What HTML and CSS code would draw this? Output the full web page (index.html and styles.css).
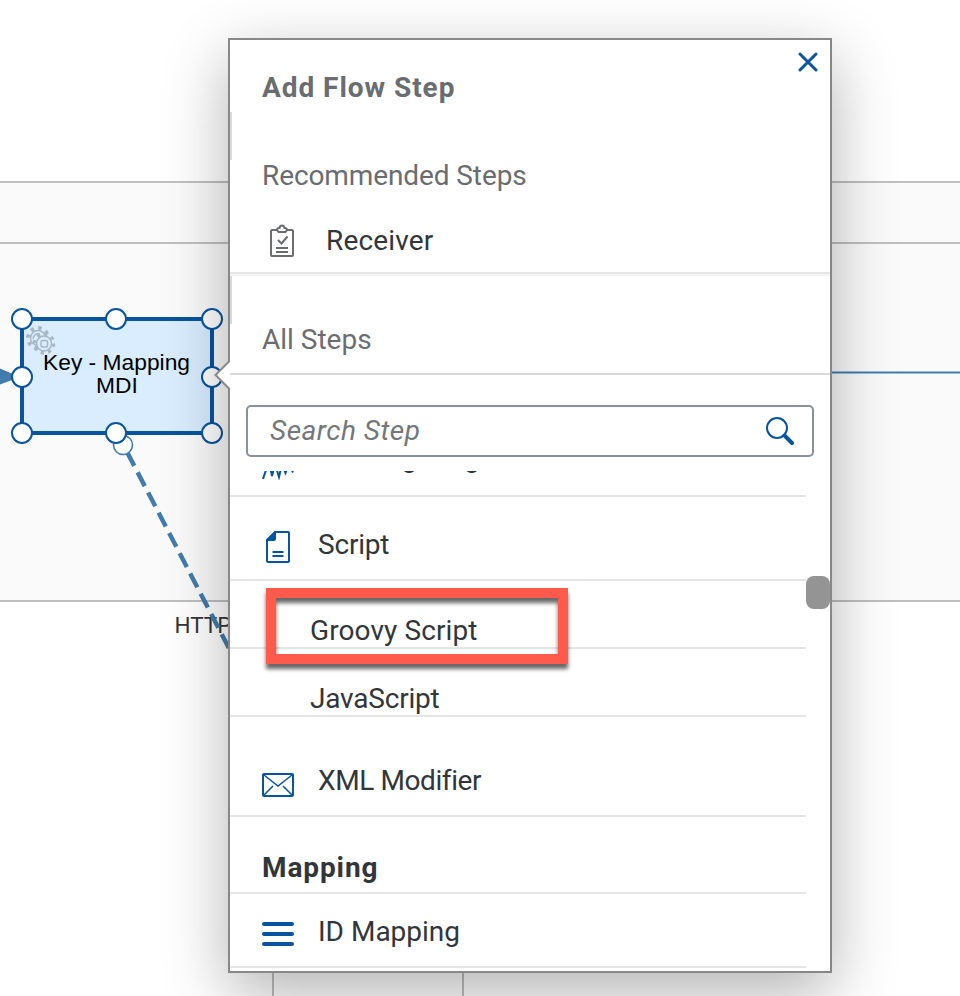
FILE: index.html
```
<!DOCTYPE html>
<html lang="en">
<head>
<meta charset="utf-8">
<title>Add Flow Step</title>
<link rel="stylesheet" href="styles.css">
</head>
<body>
<main class="editor">
  <svg class="canvas" width="960" height="996" viewBox="0 0 960 996">
    <rect x="0" y="182" width="960" height="419" fill="#fafafa"/>
    <path d="M0 182H960M0 243H960M0 601H960M273 960V996M463 960V996" stroke="#bfbfbf" stroke-width="2" fill="none"/>
    <path d="M820 372.5H960" stroke="#427cac" stroke-width="2"/>
    <path d="M0 368.500L20 377L0 384.500Z" fill="#427cac"/>
    <rect x="22" y="319" width="190" height="114" fill="#d9edff" stroke="#0854a0" stroke-width="4"/>
    <g fill="none" stroke="#a9b7c3" stroke-width="1.500">
      <circle cx="38" cy="338" r="7.500"/>
      <circle cx="38" cy="338" r="10" stroke-width="4" stroke-dasharray="3.400 4.450"/>
      <path d="M33 339Q34 333 40 334"/>
      <circle cx="44" cy="343.500" r="7.500" fill="#d9edff"/>
      <circle cx="44" cy="343.500" r="9.500" stroke-width="3.500" stroke-dasharray="3.200 4.260"/>
      <rect x="41" y="340.500" width="6.500" height="6.500" rx="1.500"/>
    </g>
    <g class="node-label">
      <text x="116.500" y="370">Key - Mapping</text>
      <text x="117" y="393">MDI</text>
    </g>
    <text class="edge-label" x="174.500" y="633">HTTPS</text>
    <path d="M125.500 449L232 654" stroke="#427cac" stroke-width="4.500" stroke-dasharray="15.500 7.300" stroke-dashoffset="-3.500"/>
    <circle cx="123" cy="445" r="9.500" fill="#fff" stroke="#427cac" stroke-width="1.600"/>
    <g fill="#fff" stroke="#0854a0" stroke-width="2">
      <circle cx="22" cy="319" r="10"/><circle cx="116" cy="319" r="10"/><circle cx="212" cy="319" r="10"/>
      <circle cx="22" cy="377" r="10"/><circle cx="212" cy="377" r="10"/>
      <circle cx="22" cy="433" r="10"/><circle cx="116" cy="433" r="10"/><circle cx="212" cy="433" r="10"/>
    </g>
  </svg>

  <section class="popover">
    <svg class="pointer" width="16" height="32" viewBox="0 0 16 32"><path d="M16 1V31L1.500 16Z" fill="#fff"/><path d="M16 1.500L1.500 16L16 30.500" fill="none" stroke="#888" stroke-width="2"/></svg>
    <button class="close" aria-label="Close"><svg width="20" height="20" viewBox="0 0 20 20"><path d="M2 2L18 18M18 2L2 18" stroke="#0854a0" stroke-width="3" stroke-linecap="round"/></svg></button>
    <header class="title"><h1>Add Flow Step</h1></header>
    <div class="group recommended"><h2 class="t-rec">Recommended Steps</h2></div>
    <div class="receiver">
      <svg width="24" height="34" viewBox="0 0 24 34" fill="none" stroke="#6a6d70" stroke-width="2"><path d="M7 6H2Q1 6 1 7V31Q1 32 2 32H22Q23 32 23 31V7Q23 6 22 6H17"/><path d="M7 6Q7 4 9.500 4Q10 1.500 12 1.500T14.500 4Q17 4 17 6L15.500 8H8.500Z"/><path d="M8 16L11.500 19.500L17.500 12.500M6 24H18M6 28H18"/></svg>
      <span class="t-receiver">Receiver</span>
    </div>
    <div class="group all"><h2 class="t-all">All Steps</h2></div>
    <div class="search">
      <span class="placeholder">Search Step</span>
      <svg width="28" height="28" viewBox="0 0 28 28" fill="none" stroke="#0854a0"><circle cx="11" cy="11" r="10" stroke-width="2"/><path d="M18.500 18.500L26 26" stroke-width="4" stroke-linecap="round"/></svg>
    </div>
    <div class="scroller">
      <ul class="steps">
        <li class="step digest"><span class="icon"><svg width="32" height="30" viewBox="0 0 32 30" fill="none" stroke="#0854a0" stroke-width="2"><path d="M1 29L7 11L10 26L13 14L17 27L20 14L23.500 23L27 14L31 22.500"/></svg></span><span class="t-digest">Message Digest</span></li>
        <li class="step script"><span class="icon"><svg width="32" height="32" viewBox="0 0 32 32"><path d="M13 1H26Q27 1 27 2V30Q27 31 26 31H6Q5 31 5 30V9Z" fill="none" stroke="#0854a0" stroke-width="2"/><path d="M13 1L5 9V10H12Q14 10 14 8V1Z" fill="#0854a0"/><path d="M10.500 21H21.500M10.500 25H21.500" stroke="#0854a0" stroke-width="2"/></svg></span><span class="t-script">Script</span></li>
        <li class="step sub groovy"><span class="t-groovy">Groovy Script</span></li>
        <li class="step sub javascript"><span class="t-java">JavaScript</span></li>
        <li class="step xml"><span class="icon"><svg width="32" height="24" viewBox="0 0 32 24" fill="none" stroke="#0854a0"><rect x="1" y="1" width="30" height="22" rx="1" stroke-width="2"/><path d="M2 2L16 13L30 2M2 22L11 13M21 13L30 22" stroke-width="1.500"/></svg></span><span class="t-xml">XML Modifier</span></li>
        <li class="step heading"><h3>Mapping</h3></li>
        <li class="step id"><span class="icon"><svg width="32" height="24" viewBox="0 0 32 24"><path d="M2 2H30M2 12H30M2 22H30" stroke="#0854a0" stroke-width="4" stroke-linecap="round"/></svg></span><span class="t-id">ID Mapping</span></li>
      </ul>
      <div class="scrollbar"><div class="thumb"></div></div>
    </div>
    <div class="highlight"></div>
  </section>
</main>
</body>
</html>
```
FILE: styles.css
```
* { box-sizing: border-box; }
body { margin: 0; background: #fff; font-family: Roboto, "Liberation Sans", sans-serif; font-size: 28px; line-height: 32px; color: #32363a; }
h1, h2, h3, ul { margin: 0; padding: 0; font-size: inherit; }
h2 { font-weight: 400; }
svg { display: block; }
.editor { position: relative; width: 960px; height: 996px; overflow: hidden; }
.canvas { display: block; }
.node-label { font-family: "Liberation Sans", sans-serif; font-size: 22.8px; text-anchor: middle; fill: #000; }
.edge-label { font-size: 22.5px; fill: #32363a; }

.popover { position: absolute; left: 228px; top: 38px; width: 604px; height: 935px; display: flex; flex-direction: column; background: #fff; border: 2px solid #888; box-shadow: 0 20px 60px rgba(0, 0, 0, .3); white-space: nowrap; }
.pointer { position: absolute; left: -16px; top: 319px; }
.close { position: absolute; right: 12px; top: 12px; padding: 0; border: 0; background: none; }
.title { height: 72px; padding: 32px 32px 0; color: #6a6d70; letter-spacing: .95px; }
.group { padding: 0 32px; color: #6a6d70; }
.recommended { height: 88px; padding-top: 48px; position: relative; }
.recommended::before, .all::before { content: ""; position: absolute; left: 0; top: 0; width: 2px; height: 48px; background: #d9d9d9; }
.receiver { display: flex; align-items: center; height: 76px; padding: 8px 40px 0; gap: 32px; border-bottom: 2px solid #f5f5f5; box-shadow: inset 0 -2px #e5e5e5; color: #32363a; }
.all { height: 99px; padding-top: 48px; border-bottom: 2px solid #d9d9d9; position: relative; }
.search { display: flex; align-items: center; justify-content: space-between; flex: none; height: 52px; margin: 30px 16px 14px; padding: 0 18px 0 22px; border: 2px solid #89919a; border-radius: 5px; }
.placeholder { font-style: italic; letter-spacing: .5px; color: #74777a; }
.t-rec { letter-spacing: -.1px; }
.t-receiver { letter-spacing: .15px; }
.t-script, .t-java { letter-spacing: -.2px; }
.t-groovy { letter-spacing: .1px; }
.t-xml { letter-spacing: -.4px; }
.scroller { display: flex; flex: 1; min-height: 0; overflow: hidden; }
.steps { width: 576px; list-style: none; }
.step { display: flex; align-items: center; padding-left: 32px; border-bottom: 2px solid #e5e5e5; }
.icon { width: 56px; flex: none; }
.digest { height: 26px; align-items: flex-end; padding-bottom: 15px; overflow: hidden; }
.t-digest { margin-bottom: 6px; }
.script { height: 84px; padding-top: 14px; }
.script .icon { padding-top: 4px; }
.sub { height: 68px; padding: 33px 0 0 80px; }
.xml { height: 100px; padding-top: 30px; }
.xml .icon { padding-top: 8px; }
.heading { height: 77px; padding-top: 27px; letter-spacing: .9px; }
.id { height: 74px; padding-top: 4px; }
.id .icon { padding-top: 4px; }
.scrollbar { width: 24px; padding-top: 105px; }
.thumb { height: 33px; border-radius: 8px; background: #949494; }
.highlight { position: absolute; left: 36px; top: 548px; width: 302px; height: 76px; border: 10px solid #ff5a4c; box-shadow: 0 5px 4px rgba(0, 0, 0, .6), inset 0 5px 4px rgba(0, 0, 0, .6); }
```
